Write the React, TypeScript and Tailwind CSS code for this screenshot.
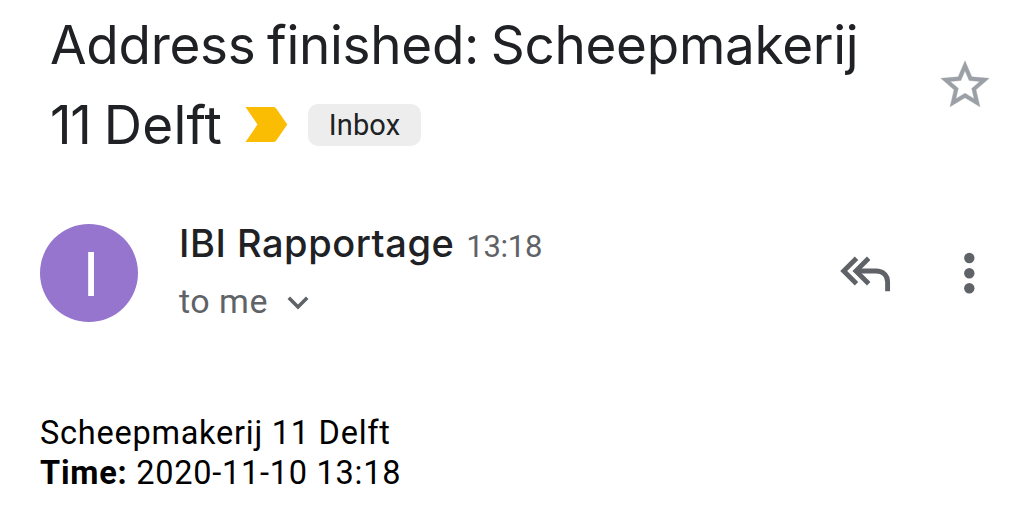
import type { ReactNode } from 'react'

interface Email {
  subject: string
  number: string
  city: string
  label: string
  sender: string
  time: string
}

const EMAIL: Email = {
  subject: 'Address finished: Scheepmakerij',
  number: '11',
  city: 'Delft',
  label: 'Inbox',
  sender: 'IBI Rapportage',
  time: '13:18',
}

function ImportantMarker() {
  return (
    <svg className="mb-0.5 ml-[23px] h-[35px] w-[43px]" viewBox="0 0 43 35" fill="#fbbc04">
      <path d="M0.5 0H28c1.6 0 2.4.5 3.4 1.8L42.3 17.5 31.4 33.2C30.4 34.5 29.6 35 28 35H0.5L12.5 17.5Z" />
    </svg>
  )
}

function StarIcon() {
  return (
    <svg className="h-[58px] w-[58px]" viewBox="0 0 24 24" fill="#9aa0a6">
      <path
        d="M22 9.24l-7.19-.62L12 2 9.19 8.63 2 9.24l5.46 4.73L5.82 21 12 17.27 18.18 21l-1.63-7.03L22 9.24zM12 15.4l-3.76 2.27 1-4.28-3.32-2.88 4.38-.38L12 6.1l1.71 4.04 4.38.38-3.32 2.88 1 4.28L12 15.4z"
        stroke="#9aa0a6"
        strokeWidth="0.15"
      />
    </svg>
  )
}

function ReplyAllIcon() {
  return (
    <svg className="h-[37px] w-[51px]" viewBox="0 0 51 37" fill="none" stroke="#5f6368" strokeWidth="4.9">
      <path d="M16.5 3.2 3.7 16 16.5 28.8" />
      <path d="M28.7 3.2 15.9 16 28.7 28.8" />
      <path d="M16.5 16H36C43 16 47.6 20.5 47.6 27V36.3" />
    </svg>
  )
}

function MoreIcon() {
  return (
    <svg className="h-[42px] w-[12px]" viewBox="0 0 12 42" fill="#5f6368">
      <circle cx="6.3" cy="6" r="5.2" />
      <circle cx="6.3" cy="21.2" r="5.2" />
      <circle cx="6.3" cy="36.2" r="5.2" />
    </svg>
  )
}

function ChevronIcon() {
  return (
    <svg className="mt-0.5 ml-[19px] h-[14px] w-[22px]" viewBox="0 0 22 14" fill="none" stroke="#5f6368" strokeWidth="3.6">
      <path d="M1.8 1.8 11 11 20.2 1.8" />
    </svg>
  )
}

function BodyLine({ children }: { children: ReactNode }) {
  return <p className="h-10 whitespace-nowrap leading-10">{children}</p>
}

export default function App() {
  return (
    <div className="h-[505px] w-[1024px] overflow-hidden bg-white font-['Roboto',sans-serif] text-[#202124]">
      <header className="flex h-[224px] justify-between pr-[30px] pl-[50px]">
        <h1 className="pt-[5px] font-['Inter',sans-serif] text-[53px] font-normal whitespace-nowrap">
          <span className="block h-20 leading-20 tracking-[-0.28px] [word-spacing:-3px]">{EMAIL.subject}</span>
          <span className="flex h-20 items-center">
            <span className="leading-20 tracking-[-1.4px]">
              {EMAIL.number} <span className="tracking-[0.2px]">{EMAIL.city}</span>
            </span>
            <ImportantMarker />
            <span className="ml-5 flex h-[42px] w-[113px] items-center justify-center rounded-[10px] bg-[#ededed] pt-px font-['Roboto',sans-serif] text-[29px] leading-none tracking-[0.1px]">
              {EMAIL.label}
            </span>
          </span>
        </h1>
        <div className="pt-[56px]">
          <StarIcon />
        </div>
      </header>

      <section className="flex h-[98px] items-center pr-[49px] pl-10">
        <div className="flex size-[98px] items-center justify-center rounded-full bg-[#9575cd] pt-[5px] pl-[4px] text-[61px] leading-none text-white">
          I
        </div>
        <div className="ml-[41px] flex-1 whitespace-nowrap">
          <div className="flex h-[53px] items-baseline">
            <span className="font-['Inter',sans-serif] text-[38px] leading-[53px] font-medium tracking-[0.55px]">
              {EMAIL.sender}
            </span>
            <span className="ml-3 text-[31px] tracking-[-0.3px] text-[#5f6368]">{EMAIL.time}</span>
          </div>
          <div className="flex h-[60px] items-center pt-1 text-[34px] tracking-[0.5px] text-[#5f6368]">
            to me
            <ChevronIcon />
          </div>
        </div>
        <div className="flex items-center gap-[72px]">
          <ReplyAllIcon />
          <MoreIcon />
        </div>
      </section>

      <main className="mt-[91px] pl-10 text-[32.5px] tracking-[0.75px] text-black">
        <BodyLine>Scheepmakerij 11 Delft</BodyLine>
        <BodyLine>
          <b className="font-bold">Time:</b> 2020-11-10 13:18
        </BodyLine>
      </main>
    </div>
  )
}
